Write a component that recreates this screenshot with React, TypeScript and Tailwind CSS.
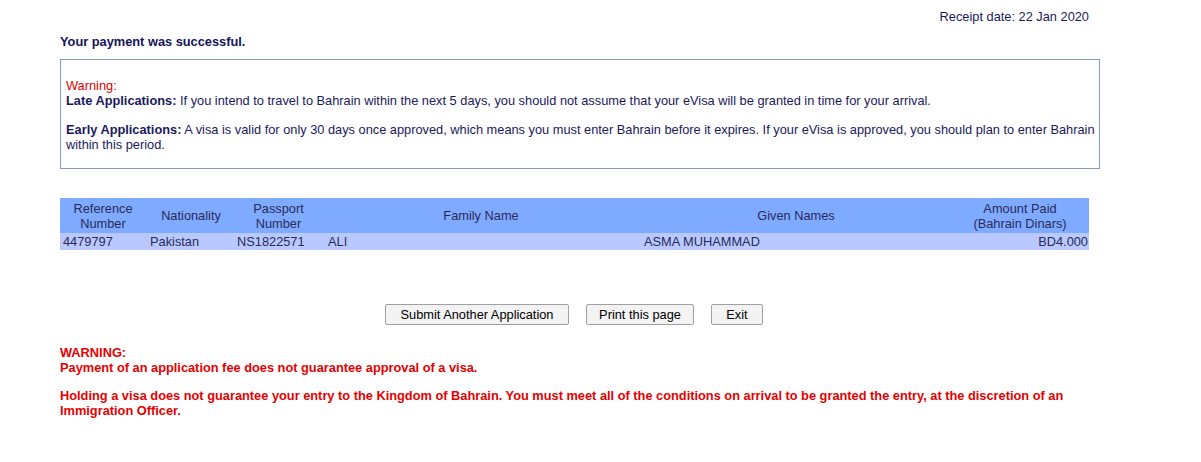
export default function App() {
  return (
    <div className="bg-white min-h-[462px] font-['Liberation_Sans',Arial,sans-serif] text-[12.8px] leading-[15px] text-[#1a1a5c]">
      <div className="w-[1040px] ml-[60px] pt-[9px]">
        {/* receipt header */}
        <div className="w-[1029px] text-right">Receipt date: 22 Jan 2020</div>
        <p className="mt-[10px] font-bold text-[#14145a]">Your payment was successful.</p>

        {/* warning box */}
        <div className="mt-[10px] h-[110px] border border-[#7f9db9] pl-[5px] pt-[18px]">
          <p className="text-[#e00000]">Warning:</p>
          <p>
            <b>Late Applications:</b> If you intend to travel to Bahrain within the next 5 days, you should not assume that your eVisa will be granted in time for your arrival.
          </p>
          <p className="mt-[14px]">
            <b>Early Applications:</b> A visa is valid for only 30 days once approved, which means you must enter Bahrain before it expires. If your eVisa is approved, you should plan to enter Bahrain within this period.
          </p>
        </div>

        {/* payment table */}
        <table className="mt-[29px] w-[1029px] border-collapse text-[#2a2a5a]">
          <thead>
            <tr className="bg-[#7eaaff] h-[35px] leading-[15px]">
              <th className="w-[86px] font-normal text-center">Reference<br />Number</th>
              <th className="w-[90px] font-normal text-center">Nationality</th>
              <th className="w-[85px] font-normal text-center">Passport<br />Number</th>
              <th className="w-[320px] font-normal text-center">Family Name</th>
              <th className="w-[310px] font-normal text-center">Given Names</th>
              <th className="font-normal text-center">Amount Paid<br />(Bahrain Dinars)</th>
            </tr>
          </thead>
          <tbody>
            <tr className="bg-[#b9c9ff] h-[17px] leading-[15px]">
              <td className="pl-[3px]">4479797</td>
              <td className="pl-[4px]">Pakistan</td>
              <td className="pl-[1px]">NS1822571</td>
              <td className="pl-[7px]">ALI</td>
              <td className="pl-[3px]">ASMA MUHAMMAD</td>
              <td className="text-right pr-[1px]">BD4.000</td>
            </tr>
          </tbody>
        </table>

        {/* actions */}
        <div className="mt-[54px] ml-[325px] flex gap-[17px] text-black">
          <button className="h-[21px] w-[184px] border border-[#a0a0a0] bg-[#f3f3f3] rounded-[2px]">Submit Another Application</button>
          <button className="h-[21px] w-[108px] border border-[#a0a0a0] bg-[#f3f3f3] rounded-[2px]">Print this page</button>
          <button className="h-[21px] w-[52px] border border-[#a0a0a0] bg-[#f3f3f3] rounded-[2px]">Exit</button>
        </div>

        {/* bottom warning */}
        <div className="mt-[20px] font-bold text-[#e60000]">
          <p>WARNING:</p>
          <p>Payment of an application fee does not guarantee approval of a visa.</p>
          <p className="mt-[13px] w-[1020px]">
            Holding a visa does not guarantee your entry to the Kingdom of Bahrain. You must meet all of the conditions on arrival to be granted the entry, at the discretion of an Immigration Officer.
          </p>
        </div>
      </div>
    </div>
  );
}
